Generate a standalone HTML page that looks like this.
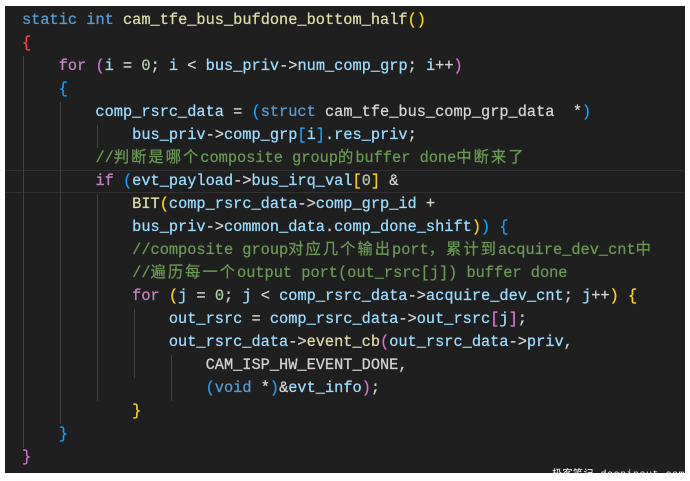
<!DOCTYPE html>
<html><head><meta charset="utf-8"><style>
html,body{margin:0;padding:0;background:#fff;width:690px;height:480px;overflow:hidden}
#box{position:absolute;left:5px;top:6px;width:680px;height:467px;background:#1f1f1f}
pre{position:absolute;left:17px;top:2.5px;margin:0;font-family:"Liberation Mono","Noto Sans CJK SC",monospace;font-size:15.3px;line-height:23.05px;color:#9cdcfe;white-space:pre;-webkit-text-stroke:0.25px}
.k{color:#569cd6}.c{color:#c586c0}.f{color:#dcdcaa}.n{color:#b5cea8}.o{color:#d4d4d4}.g{color:#6a9955}
.z{letter-spacing:2px}
.b1{color:#ffd700}.b2{color:#da70d6}.b3{color:#179fff}.r{color:#f44747}
.guide{position:absolute;width:1px;background:#404040}
#cur{position:absolute;left:0;width:680px;top:164px;height:21px;border-top:1px solid #303030;border-bottom:1px solid #303030}
#wm{position:absolute;left:552px;top:465px;font-family:"Liberation Mono","Noto Sans CJK SC",monospace;font-size:10px;color:#fff;letter-spacing:0.5px;z-index:5}
</style></head><body>
<div id="box">
<div id="cur"></div>
<div class="guide" style="left:18px;top:50px;height:392px"></div>
<div class="guide" style="left:55px;top:96px;height:322px"></div>
<div class="guide" style="left:92px;top:119px;height:23px"></div>
<div class="guide" style="left:92px;top:188px;height:207px"></div>
<div class="guide" style="left:129px;top:303px;height:69px"></div>
<div class="guide" style="left:166px;top:349px;height:46px"></div>
<pre><span class="k">static</span> <span class="k">int</span> <span class="f">cam_tfe_bus_bufdone_bottom_half</span><span class="b1">()</span>
<span class="r">{</span>
    <span class="c">for</span> <span class="b2">(</span>i <span class="o">=</span> <span class="n">0</span><span class="o">;</span> i <span class="o">&lt;</span> bus_priv<span class="o">-&gt;</span>num_comp_grp<span class="o">;</span> i<span class="o">++</span><span class="b2">)</span>
    <span class="b3">{</span>
        comp_rsrc_data <span class="o">=</span> <span class="b3">(</span><span class="k">struct</span> <span class="o">cam_tfe_bus_comp_grp_data  *</span><span class="b3">)</span>
            bus_priv<span class="o">-&gt;</span>comp_grp<span class="b3">[</span>i<span class="b3">]</span><span class="o">.</span>res_priv<span class="o">;</span>
        <span class="g">//<span class="z">判断是哪个</span>composite group<span class="z">的</span>buffer done<span class="z">中断来了</span></span>
        <span class="c">if</span> <span class="b3">(</span>evt_payload<span class="o">-&gt;</span>bus_irq_val<span class="b1">[</span><span class="n">0</span><span class="b1">]</span> <span class="o">&amp;</span>
            <span class="f">BIT</span><span class="b1">(</span>comp_rsrc_data<span class="o">-&gt;</span>comp_grp_id <span class="o">+</span>
            bus_priv<span class="o">-&gt;</span>common_data<span class="o">.</span>comp_done_shift<span class="b1">)</span><span class="b3">)</span> <span class="b3">{</span>
            <span class="g">//composite group<span class="z">对应几个输出</span>port<span class="z">，累计到</span>acquire_dev_cnt<span class="z">中</span></span>
            <span class="g">//<span class="z">遍历每一个</span>output port(out_rsrc[j]) buffer done</span>
            <span class="c">for</span> <span class="b1">(</span>j <span class="o">=</span> <span class="n">0</span><span class="o">;</span> j <span class="o">&lt;</span> comp_rsrc_data<span class="o">-&gt;</span>acquire_dev_cnt<span class="o">;</span> j<span class="o">++</span><span class="b1">)</span> <span class="b1">{</span>
                out_rsrc <span class="o">=</span> comp_rsrc_data<span class="o">-&gt;</span>out_rsrc<span class="b2">[</span>j<span class="b2">]</span><span class="o">;</span>
                out_rsrc_data<span class="o">-&gt;</span><span class="f">event_cb</span><span class="b2">(</span>out_rsrc_data<span class="o">-&gt;</span>priv<span class="o">,</span>
                    <span class="o">CAM_ISP_HW_EVENT_DONE,</span>
                    <span class="b3">(</span><span class="k">void</span> <span class="o">*</span><span class="b3">)</span><span class="o">&amp;</span>evt_info<span class="b2">)</span><span class="o">;</span>
            <span class="b1">}</span>
    <span class="b3">}</span>
<span class="b2">}</span></pre>
</div>
<div id="wm">极客笔记 deepinout.com</div>
</body></html>
